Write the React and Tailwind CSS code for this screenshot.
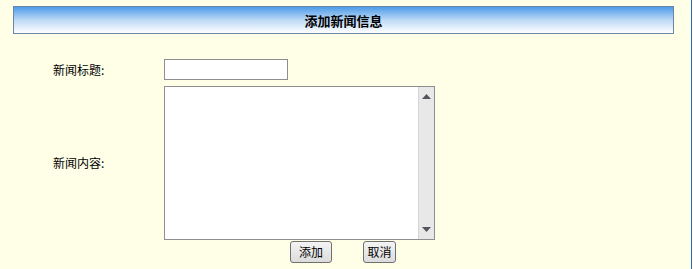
export default function App() {
  const font = { fontFamily: '"Noto Sans CJK SC", "Liberation Sans", sans-serif' };
  return (
    <div className="w-[693px] h-[269px] bg-[#FFFFE8] overflow-hidden flex" style={font}>
      <div className="w-[691px] h-full flex flex-col">
        <div className="ml-[13px] mt-[6px] w-[661px] h-[28px] border border-[#6B87A8] bg-gradient-to-b from-[#4A9BE8] via-[#BCD9F5] to-white flex items-center justify-center">
          <span className="text-[13px] font-bold text-black leading-none">添加新闻信息</span>
        </div>
        <div className="flex items-center mt-[25px] h-[21px]">
          <div className="w-[164px] pl-[53px] text-[12px] text-black leading-none">新闻标题:</div>
          <input className="w-[124px] h-[21px] border border-[#8E8E8E] bg-white outline-none" />
        </div>
        <div className="flex items-center mt-[6px] h-[154px]">
          <div className="w-[164px] pl-[53px] text-[12px] text-black leading-none">新闻内容:</div>
          <div className="w-[271px] h-[154px] border border-[#8E8E8E] bg-white flex">
            <textarea className="flex-1 h-full resize-none outline-none bg-white overflow-hidden" />
            <div className="w-[16px] h-full bg-[#E8E8E8] border-l border-[#D4D4D4] flex flex-col items-center justify-between py-[7px]">
              <svg width="9" height="5" viewBox="0 0 9 5"><path d="M4.5 0 L9 5 L0 5 Z" fill="#55555F" /></svg>
              <svg width="9" height="5" viewBox="0 0 9 5"><path d="M0 0 L9 0 L4.5 5 Z" fill="#55555F" /></svg>
            </div>
          </div>
        </div>
        <div className="flex gap-[31px] mt-[1px] ml-[290px]">
          <button className="w-[42px] h-[22px] border border-[#707070] rounded-[3px] bg-gradient-to-b from-[#F4F4F4] to-[#DCDCDC] text-[12px] text-black leading-none">添加</button>
          <button className="w-[33px] h-[22px] border border-[#707070] rounded-[3px] bg-gradient-to-b from-[#F4F4F4] to-[#DCDCDC] text-[12px] text-black leading-none">取消</button>
        </div>
      </div>
      <div className="w-[1px] h-full bg-[#2A62C8]" />
      <div className="w-[1px] h-full" />
    </div>
  );
}
